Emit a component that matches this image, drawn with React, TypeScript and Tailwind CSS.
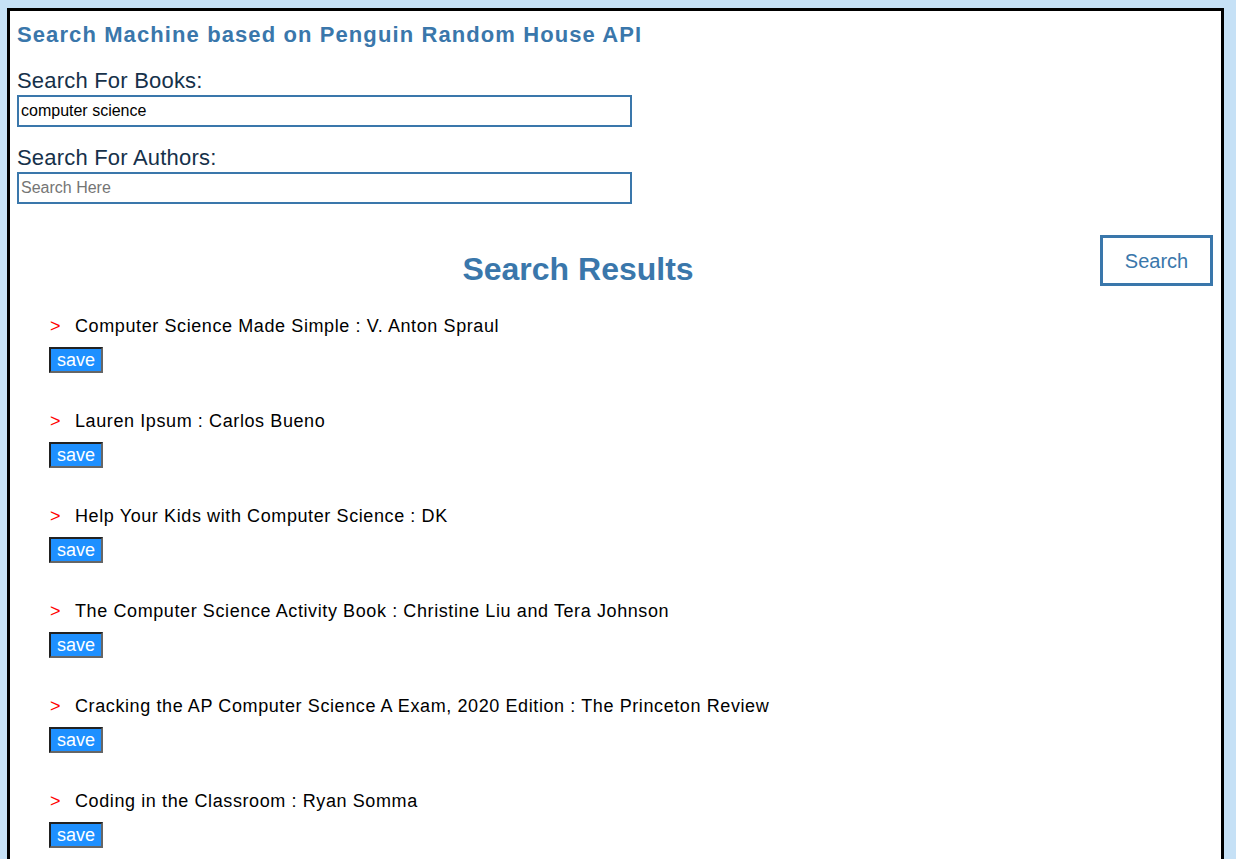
import React, { useState } from 'react';

interface Book {
  title: string;
  author: string;
}

const books: Book[] = [
  { title: 'Computer Science Made Simple', author: 'V. Anton Spraul' },
  { title: 'Lauren Ipsum', author: 'Carlos Bueno' },
  { title: 'Help Your Kids with Computer Science', author: 'DK' },
  { title: 'The Computer Science Activity Book', author: 'Christine Liu and Tera Johnson' },
  { title: 'Cracking the AP Computer Science A Exam, 2020 Edition', author: 'The Princeton Review' },
  { title: 'Coding in the Classroom', author: 'Ryan Somma' },
];

const App: React.FC = () => {
  const [bookQuery, setBookQuery] = useState('computer science');
  const [authorQuery, setAuthorQuery] = useState('');

  return (
    <div className="min-h-[859px] bg-[#c6e1f6] pt-[8px] pl-[7px] font-['Liberation_Sans',Arial,sans-serif]">
      <div className="w-[1217px] min-h-[860px] border-[3px] border-b-0 border-black bg-white">
        {/* Header */}
        <h1 className="pl-[7px] pt-[11px] text-[22px] leading-[26px] font-bold tracking-[1.1px] text-[#3a77ab]">
          Search Machine based on Penguin Random House API
        </h1>

        {/* Search form */}
        <div className="pl-[7px]">
          <label className="mt-[20px] block text-[22px] leading-[26px] tracking-[0.2px] text-[#16314a]">Search For Books:</label>
          <input
            type="text"
            value={bookQuery}
            onChange={(e) => setBookQuery(e.target.value)}
            className="mt-[1px] block h-[32px] w-[615px] border-2 border-[#3a77ab] px-[2px] text-[16px] text-black outline-none"
          />
          <label className="mt-[18px] block text-[22px] leading-[26px] tracking-[0.2px] text-[#16314a]">Search For Authors:</label>
          <input
            type="text"
            value={authorQuery}
            placeholder="Search Here"
            onChange={(e) => setAuthorQuery(e.target.value)}
            className="mt-[1px] block h-[32px] w-[615px] border-2 border-[#3a77ab] px-[2px] text-[16px] text-black outline-none placeholder:text-[#757575]"
          />
        </div>

        {/* Results header */}
        <div className="mt-[31px] flex items-start">
          <h2 className="mt-[16px] flex-1 pl-[46px] text-center text-[32px] leading-[36px] font-bold text-[#3a77ab]">
            Search Results
          </h2>
          <button className="mr-[8px] h-[51px] w-[113px] border-[3px] border-[#3a77ab] bg-white text-[20px] text-[#3a77ab]">
            Search
          </button>
        </div>

        {/* Results list */}
        <ul className="mt-[28px] pl-[39px]">
          {books.map((book) => (
            <li key={book.title} className="mb-[37px]">
              <div className="flex text-[18px] leading-[22px] text-black">
                <span className="w-[26px] pl-[1px] text-[#ff0000]">&gt;</span>
                <span className="tracking-[0.6px]">
                  {book.title} : {book.author}
                </span>
              </div>
              <button className="mt-[10px] block h-[26px] border-2 border-t-[#222] border-l-[#222] border-r-[#666] border-b-[#666] bg-[#1e90ff] px-[6px] text-[18px] leading-[20px] text-white">
                save
              </button>
            </li>
          ))}
        </ul>
      </div>
    </div>
  );
};

export default App;
